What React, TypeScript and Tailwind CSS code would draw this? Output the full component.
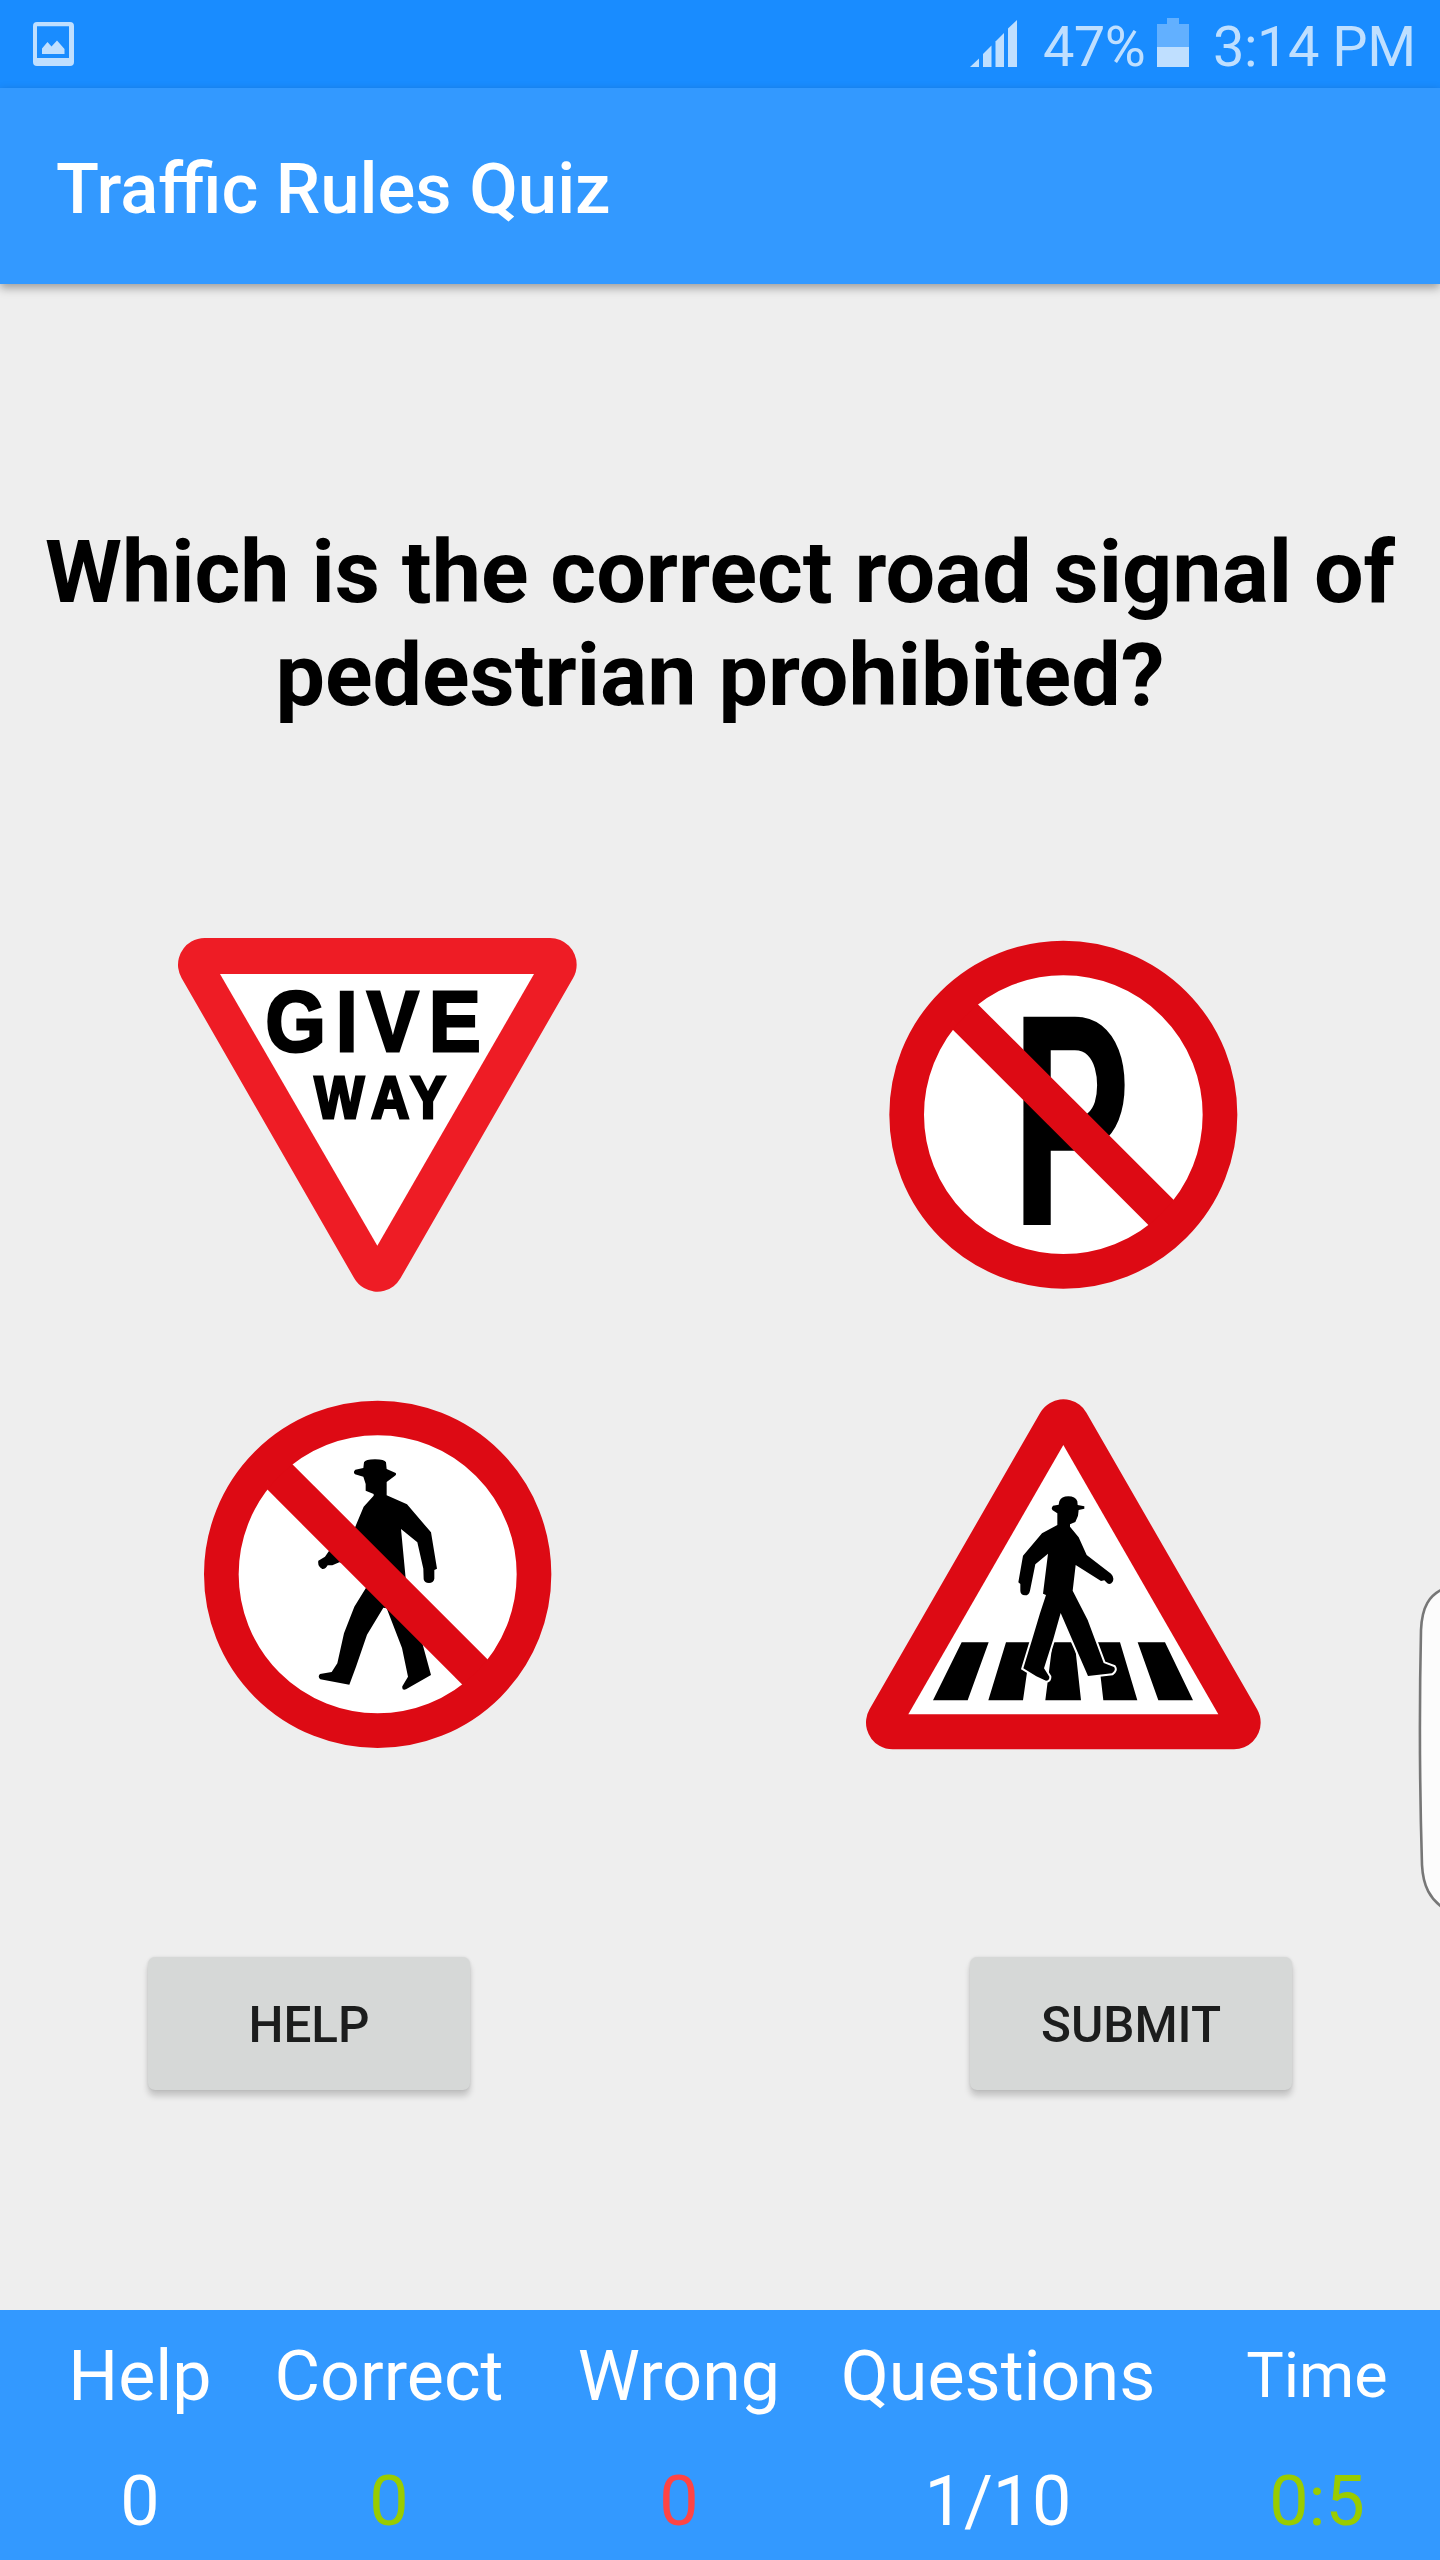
import React from "react";

type Stat = {
  label: string;
  value: string;
  width: string;
  labelClass?: string;
  valueClass: string;
};

const stats: Stat[] = [
  { label: "Help", value: "0", width: "w-[160px]", valueClass: "text-white" },
  { label: "Correct", value: "0", width: "w-[338px]", valueClass: "text-[#99cc00]" },
  { label: "Wrong", value: "0", width: "w-[242px]", valueClass: "text-[#ff4444]" },
  { label: "Questions", value: "1/10", width: "w-[396px]", valueClass: "text-white" },
  { label: "Time", value: "0:5", width: "w-[242px]", labelClass: "text-[63px]", valueClass: "text-[#99cc00]" },
];

function StatusBar() {
  return (
    <div className="flex h-[88px] items-start bg-[#198cff] pl-[33px] pr-[27px] text-[56px] leading-[66px] text-[#bfdfff]">
      <svg className="mt-[22px] h-[44px] w-[41px]" viewBox="0 0 41 44" fill="currentColor">
        <path fillRule="evenodd" d="M4 0H37Q41 0 41 4V40Q41 44 37 44H4Q0 44 0 40V4Q0 0 4 0ZM4 4.3V36H36V4.3Z" />
        <path d="M9 32V26.5L14.5 20L18.5 24.5L24 18.5L31.5 27V32Z" />
      </svg>
      <svg className="ml-auto mt-[20px] h-[47px] w-[47px]" viewBox="0 0 47 47" fill="currentColor">
        <path d="M0 47L9 38.5V47Z" />
        <path d="M13 34L21.5 25.5V47H13Z" />
        <path d="M25.5 21.5L34 13V47H25.5Z" />
        <path d="M38 8.5L47 0V47H38Z" />
      </svg>
      <span className="ml-[26px] mt-[14px] w-[103px] tracking-[-0.6px]">47%</span>
      <svg className="ml-[11px] mt-[18px] h-[49px] w-[32px]" viewBox="0 0 32 49">
        <path d="M10 0H22V6H32V29H0V6H10Z" fill="#62b0ff" />
        <path d="M0 29H32V49H0Z" fill="currentColor" />
      </svg>
      <span className="ml-[24px] mt-[14px] w-[200px] whitespace-nowrap tracking-[-0.5px]">3:14 PM</span>
    </div>
  );
}

function GiveWaySign() {
  return (
    <svg className="h-[390px] w-[440px]" viewBox="0 0 1320 1170">
      <path d="M134 134H1170L652 1035Z" fill="#ee1c25" stroke="#ee1c25" strokeWidth="160" strokeLinejoin="round" />
      <path d="M180 162H1122L652 977Z" fill="#fff" />
      <text
        transform="scale(0.9 1)"
        fontFamily="Liberation Sans, Arial, sans-serif"
        fontWeight="700"
        stroke="#000"
        strokeWidth="9"
      >
        <tspan x="352 587 690 897" y="394" fontSize="258">GIVE</tspan>
        <tspan x="515 704 835" y="594" fontSize="175">WAY</tspan>
      </text>
    </svg>
  );
}

function NoParkingSign() {
  return (
    <svg className="h-[390px] w-[440px]" viewBox="-60 0 1320 1170">
      <circle cx="610" cy="584" r="470" fill="#fff" />
      <text
        transform="translate(488 915) scale(0.635 1)"
        x="-52"
        y="0"
        fontFamily="Roboto, sans-serif"
        fontSize="879"
        fontWeight="700"
      >
        P
      </text>
      <path d="M290 265L930 904" stroke="#dd0a14" strokeWidth="107" />
      <circle cx="610" cy="584" r="470" fill="none" stroke="#dd0a14" strokeWidth="104" />
    </svg>
  );
}

function NoPedestrianSign() {
  return (
    <svg className="h-[390px] w-[440px]" viewBox="-60 0 1320 1170">
      <circle cx="593" cy="583" r="469" fill="#fff" />
      <path d="M552 247Q556 238 585 238Q614 238 618 247L620 267L647 279Q650 284 645 287L625 302L620 306V346L681 373L753 457L771 566L763 570V596Q760 609 747 609Q733 609 731 598L730 566L712 487L663 447L677 595L690 625L727 790L753 885L678 928Q665 932 667 919L684 890L666 804L620 685L610 683L561 764L528 860L508 914L421 898Q412 890 420 882L455 876L472 850L492 760L523 680L560 620L540 560L478 547L457 556H443Q437 568 427 567Q412 559 415 542L435 530L449 510L526 440L551 380L581 347V342L557 332V312L550 290L525 283Q518 276 526 269L550 264Z" />
      <path d="M273 264L913 904" stroke="#dd0a14" strokeWidth="107" />
      <circle cx="593" cy="583" r="469" fill="none" stroke="#dd0a14" strokeWidth="104" />
    </svg>
  );
}

function CrossingSign() {
  return (
    <svg className="h-[390px] w-[440px]" viewBox="0 0 1320 1170">
      <path d="M158 1028H1182L670 138Z" fill="#dd0a14" stroke="#dd0a14" strokeWidth="160" strokeLinejoin="round" />
      <path d="M205 1003H1135L670 195Z" fill="#fff" />
      <path d="M365 787H446L383 961H279ZM498 787H574L549 961H445ZM638 787H704L723 961H616ZM770 787H840L892 961H790ZM893 787H975L1059 961H955Z" />
      <path
        d="M658 364Q664 349 685 349Q706 349 712 364L713 375L733 379V386L716 390L714 407L706 426L690 433V440L716 472L740 525L813 581Q824 592 818 605Q811 615 802 610L793 601L783 603L707 555L698 632L743 720L791 849L822 861Q829 870 816 880L744 888L700 787L662 699L640 777L612 865L628 890Q629 902 618 902L589 889L550 865L576 780L600 700L618 645L609 641L624 521L586 553L570 632Q567 646 555 646Q541 644 541 632V612L535 607L549 527L606 460L652 435V400L638 391Q632 385 639 377L656 374Z"
        stroke="#fff"
        strokeWidth="12"
        paintOrder="stroke"
      />
    </svg>
  );
}

function ActionButton({ children }: { children: React.ReactNode }) {
  return (
    <button className="flex h-[133px] w-[322px] items-center justify-center rounded-[7px] bg-[#d6d8d7] pt-[4px] text-[49.4px] font-medium text-[#1c1d1d] shadow-[0_6px_6px_rgba(0,0,0,0.18),0_0_3px_rgba(0,0,0,0.1)]">
      {children}
    </button>
  );
}

export default function App() {
  return (
    <div className="relative flex h-[2560px] w-[1440px] flex-col overflow-hidden bg-[#eeeeee] font-['Roboto',sans-serif]">
      <StatusBar />
      <header className="flex h-[196px] items-center bg-[#3399ff] pl-[56px] pt-[7px] shadow-[0_4px_9px_rgba(0,0,0,0.34)]">
        <h1 className="text-[70.6px] font-medium text-white">Traffic Rules Quiz</h1>
      </header>

      <main className="flex flex-1 flex-col">
        <h2 className="mt-[237px] text-center text-[88px] font-bold leading-[102.5px] text-black">
          Which is the correct road signal of
          <br />
          pedestrian prohibited?
        </h2>

        <div className="mt-[194px] grid grid-cols-[440px_440px] justify-center gap-x-[240px] gap-y-[70px]">
          <GiveWaySign />
          <NoParkingSign />
          <NoPedestrianSign />
          <CrossingSign />
        </div>

        <div className="mt-[187px] flex justify-between px-[148px]">
          <ActionButton>HELP</ActionButton>
          <ActionButton>SUBMIT</ActionButton>
        </div>
      </main>

      <footer className="flex h-[250px] bg-[#3399ff] pl-[60px] text-[70px] leading-[82px] text-white">
        {stats.map((stat) => (
          <div key={stat.label} className={`flex flex-col items-center pt-[25px] ${stat.width}`}>
            <span className={`h-[82px] ${stat.labelClass ?? ""}`}>{stat.label}</span>
            <span className={`mt-[43px] ${stat.valueClass}`}>{stat.value}</span>
          </div>
        ))}
      </footer>

      {/* edge panel handle */}
      <svg className="absolute right-0 top-[1580px] h-[340px] w-[22px]" viewBox="0 0 22 340">
        <path
          d="M30 7C10 14 4 28 3 50Q0.4 168 4 285C5 305 11 320 30 331"
          fill="#fcfcfc"
          stroke="#777"
          strokeWidth="2.6"
        />
      </svg>
    </div>
  );
}
